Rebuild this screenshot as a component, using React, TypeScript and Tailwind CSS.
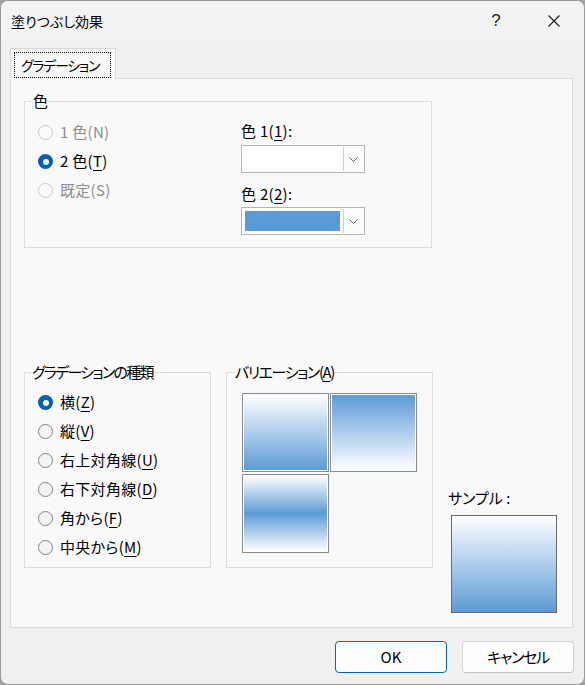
import React from "react";

type RadioProps = {
  checked?: boolean;
  disabled?: boolean;
  children: React.ReactNode;
};

function Radio({ checked, disabled, children }: RadioProps) {
  return (
    <div className="flex h-[29px] items-center gap-[7px]">
      {checked ? (
        <span className="flex size-[15px] items-center justify-center rounded-full bg-[#005fb8]">
          <span className="size-[6px] rounded-full bg-white" />
        </span>
      ) : (
        <span
          className={
            disabled
              ? "size-[15px] rounded-full border border-[#c9c9c9] bg-[#fbfbfb]"
              : "size-[15px] rounded-full border border-[#858585] bg-[#f4f4f4]"
          }
        />
      )}
      <span className={disabled ? "tracking-[0.3px] text-[#8e8e8e]" : "tracking-[0.3px] text-black"}>{children}</span>
    </div>
  );
}

function Key({ k }: { k: string }) {
  return <span className="underline decoration-1 underline-offset-[3px]">{k}</span>;
}

function Chevron() {
  return (
    <svg width="9" height="5" viewBox="0 0 9 5" fill="none">
      <path d="M0.5 0.5L4.5 4.5L8.5 0.5" stroke="#606060" strokeWidth="1" />
    </svg>
  );
}

function Combo({ fill }: { fill?: boolean }) {
  return (
    <div className="flex h-[28px] w-[124px] border border-[#b4b4b4] bg-white">
      <div className="flex flex-1">
        {fill && <div className="m-[3px] flex-1 bg-[#5b9bd5]" />}
      </div>
      <div className="my-px mr-px flex w-[20px] items-center justify-center border-l border-[#cfcfcf] bg-[#fcfcfc]">
        <Chevron />
      </div>
    </div>
  );
}

export default function App() {
  return (
    <div className="h-[685px] w-[585px] bg-[#a3a3a3] font-['Noto_Sans_CJK_JP','Noto_Sans',sans-serif] text-[15px] text-black [font-feature-settings:'palt']">
      <div className="flex h-full w-full flex-col overflow-hidden rounded-[8px] border border-[#9a9a9a] bg-[#f0f0f0]">
        {/* title bar */}
        <div className="flex h-[39px] shrink-0 items-center bg-[#f3f3f3] pl-[10px]">
          <span className="text-[14px] leading-[20px]">塗りつぶし効果</span>
          <div className="ml-auto mr-[7px] flex items-center gap-[12px]">
            <span className="flex w-[46px] justify-center font-['Liberation_Sans',sans-serif] text-[17px] font-light leading-[20px] text-[#1a1a1a]">
              ?
            </span>
            <span className="flex w-[46px] justify-center">
              <svg width="12" height="12" viewBox="0 0 12 12" fill="none">
                <path d="M0.5 0.5L11.5 11.5M11.5 0.5L0.5 11.5" stroke="#1a1a1a" strokeWidth="1.1" />
              </svg>
            </span>
          </div>
        </div>

        {/* tab */}
        <div className="relative z-10 -mb-px ml-[9px] mt-[8px] h-[31px] w-[106px] border-x border-t border-[#d9d9d9] bg-[#f9f9f9] px-[3px] pt-[3px]">
          <div className="flex h-[26px] w-[97px] items-center border border-dotted border-black pl-[6px] text-[14px] leading-[18px] tracking-[-1.3px]">
            グラデーション
          </div>
        </div>

        {/* page */}
        <div className="ml-[9px] h-[550px] w-[563px] shrink-0 border border-[#dcdcdc] bg-[#f9f9f9] px-[13px]">
          <fieldset className="mt-[14px] h-[155px] w-[408px] border border-[#dcdcdc]">
            <legend className="ml-[8px] leading-[16px]">色</legend>
            <div className="flex">
              <div className="w-[216px] pl-[13px] pt-[9px]">
                <Radio disabled>1 色(N)</Radio>
                <Radio checked>
                  2 色(<Key k="T" />)
                </Radio>
                <Radio disabled>既定(S)</Radio>
              </div>
              <div className="flex flex-col pt-[12px]">
                <span className="leading-[20px] tracking-[0.3px]">
                  色 1(<Key k="1" />):
                </span>
                <div className="mt-[4px]">
                  <Combo />
                </div>
                <span className="mt-[11px] leading-[20px] tracking-[0.3px]">
                  色 2(<Key k="2" />):
                </span>
                <div className="mt-[3px]">
                  <Combo fill />
                </div>
              </div>
            </div>
          </fieldset>

          <div className="mt-[116px] flex items-start gap-[15px]">
            <fieldset className="h-[204px] w-[187px] border border-[#dcdcdc]">
              <legend className="ml-[7px] leading-[16px] tracking-[-1.7px]">グラデーションの種類</legend>
              <div className="pl-[13px] pt-[8px]">
                <Radio checked>
                  横(<Key k="Z" />)
                </Radio>
                <Radio>
                  縦(<Key k="V" />)
                </Radio>
                <Radio>
                  右上対角線(<Key k="U" />)
                </Radio>
                <Radio>
                  右下対角線(<Key k="D" />)
                </Radio>
                <Radio>
                  角から(<Key k="F" />)
                </Radio>
                <Radio>
                  中央から(<Key k="M" />)
                </Radio>
              </div>
            </fieldset>

            <fieldset className="h-[204px] w-[207px] border border-[#dcdcdc]">
              <legend className="ml-[8px] leading-[16px] tracking-[-1.4px]">
                バリエーション(<Key k="A" />)
              </legend>
              <div className="grid grid-cols-[87px_87px] gap-x-px gap-y-[2px] pl-[15px] pt-[13px]">
                <div className="h-[79px] border border-[#8a8a94] bg-white p-px">
                  <div className="h-full w-full bg-gradient-to-b from-white to-[#5b9bd5]" />
                </div>
                <div className="h-[79px] border border-[#8a8a94] bg-white p-px">
                  <div className="h-full w-full bg-gradient-to-b from-[#5b9bd5] to-white" />
                </div>
                <div className="h-[79px] border border-[#8a8a94] bg-white p-px">
                  <div className="h-full w-full bg-gradient-to-b from-white via-[#5b9bd5] to-white" />
                </div>
              </div>
            </fieldset>

            <div className="flex flex-col pt-[124px]">
              <span className="leading-[20px]">サンプル :</span>
              <div className="ml-[3px] mt-[7px] h-[98px] w-[106px] border border-[#6a6a6a] bg-gradient-to-b from-white to-[#5b9bd5]" />
            </div>
          </div>
        </div>

        {/* buttons */}
        <div className="mt-[13px] flex justify-end gap-[15px] pr-[10px]">
          <button
            type="button"
            className="flex h-[32px] w-[112px] items-center justify-center rounded-[4px] border border-[#0067c0] bg-[#fdfdfd] leading-[20px]"
          >
            OK
          </button>
          <button
            type="button"
            className="flex h-[32px] w-[112px] items-center justify-center rounded-[4px] border border-[#d3d3d3] border-b-[#c2c2c2] bg-[#fdfdfd] leading-[20px] tracking-[-1.3px]"
          >
            キャンセル
          </button>
        </div>
      </div>
    </div>
  );
}
